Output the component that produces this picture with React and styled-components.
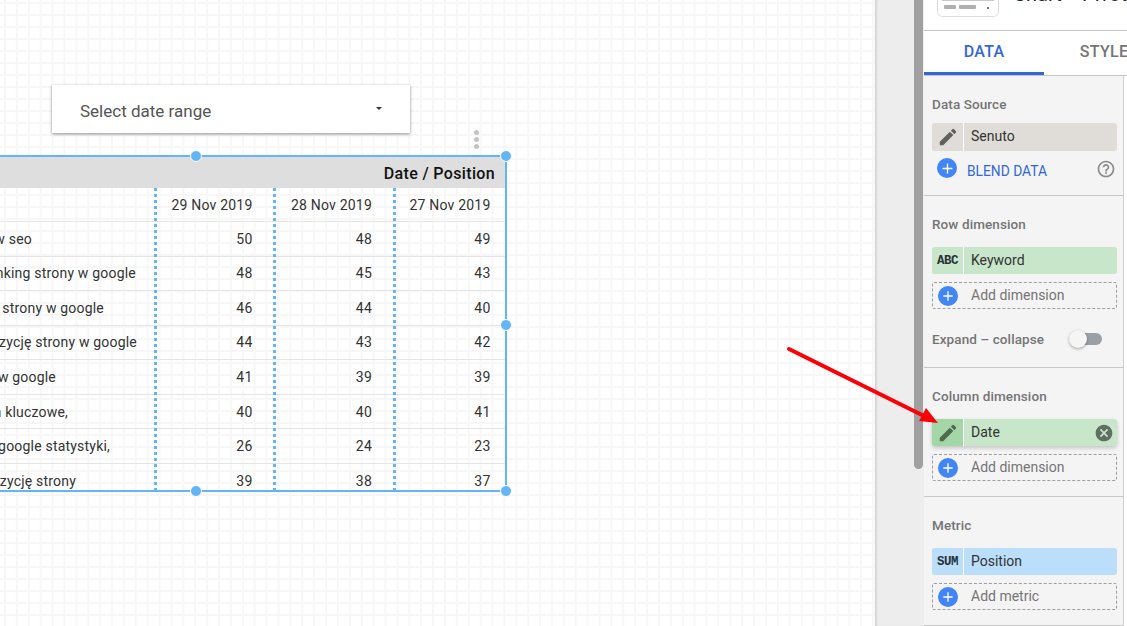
import React from 'react'
import styled, { createGlobalStyle } from 'styled-components'
import { MdEdit, MdAdd, MdHelpOutline, MdCancel } from 'react-icons/md'

const DATES = ['29 Nov 2019', '28 Nov 2019', '27 Nov 2019']

// keyword column is cut off by the left edge of the viewport, so each
// fragment carries the x where it ends
const ROWS = [
  { keyword: 'w seo', end: 32, values: [50, 48, 49] },
  { keyword: 'nking strony w google', end: 136, values: [48, 45, 43] },
  { keyword: 'strony w google', end: 104, values: [46, 44, 40] },
  { keyword: 'zycję strony w google', end: 137, values: [44, 43, 42] },
  { keyword: 'w google', end: 56, values: [41, 39, 39] },
  { keyword: 'a kluczowe,', end: 68, values: [40, 40, 41] },
  { keyword: 'google statystyki,', end: 110, values: [26, 24, 23] },
  { keyword: 'zycję strony', end: 76, values: [39, 38, 37] }
]

const Global = createGlobalStyle`
  html, body, #root {
    margin: 0;
    height: 100%;
    overflow: hidden;
  }
  body {
    font-family: Roboto, "Liberation Sans", sans-serif;
  }
`

function Handle({ x, y }) {
  return <SelectionHandle $x={x} $y={y} />
}

function Chip({ tint, iconTint, icon, label, tall, children }) {
  return (
    <ChipRow $tint={tint} $tall={tall}>
      <ChipIcon $tint={iconTint || tint}>{icon}</ChipIcon>
      <ChipLabel>{label}</ChipLabel>
      {children}
    </ChipRow>
  )
}

function AddField({ label }) {
  return (
    <DashedField>
      <AddCircle>
        <MdAdd size={16} />
      </AddCircle>
      <AddLabel>{label}</AddLabel>
    </DashedField>
  )
}

export default function App() {
  return (
    <Page>
      <Global />
      <Canvas>
        <DateFilter>
          <span>Select date range</span>
          <Caret />
        </DateFilter>
        <Kebab>
          <i />
          <i />
          <i />
        </Kebab>
        <Table>
          <TitleBar>Date / Position</TitleBar>
          <HeaderRow>
            <Cell />
            {DATES.map(date => (
              <Cell key={date}>{date}</Cell>
            ))}
          </HeaderRow>
          {ROWS.map(row => (
            <DataRow key={row.keyword}>
              <KeywordCell $end={row.end}>{row.keyword}</KeywordCell>
              {row.values.map((value, i) => (
                <Cell key={i}>{value}</Cell>
              ))}
            </DataRow>
          ))}
          <ColumnGuide $x={279} />
          <ColumnGuide $x={398} />
          <ColumnGuide $x={517.5} />
        </Table>
        <Handle x={196} y={156} />
        <Handle x={506} y={156} />
        <Handle x={506} y={325} />
        <Handle x={196} y={491} />
        <Handle x={506} y={491} />
      </Canvas>

      <Gutter>
        <ScrollThumb />
      </Gutter>

      <Panel>
        <PanelHeader>
          <ChartThumb viewBox="0 0 62 48" width="62" height="48">
            <rect x="0.5" y="0.5" width="61" height="47" rx="5" fill="#fff" stroke="#dcdcdc" />
            <rect x="7" y="24" width="8" height="4" fill="#b5b5b5" />
            <rect x="48" y="24" width="5" height="4" fill="#b5b5b5" />
            <rect x="5" y="31" width="52" height="1" fill="#c8c8c8" />
            <rect x="7" y="36" width="12" height="4" rx="1" fill="#b0b0b0" />
            <rect x="22" y="36" width="17" height="4" rx="1" fill="#b0b0b0" />
            <rect x="50" y="38" width="2" height="2" fill="#777" />
          </ChartThumb>
          <ChartTitle>Chart &gt; Pivot table</ChartTitle>
        </PanelHeader>

        <Tabs>
          <Tab $active>DATA</Tab>
          <Tab>STYLE</Tab>
        </Tabs>

        <PanelBody>
          <Sections>
            <Section>
              <SectionLabel $gap={11}>Data Source</SectionLabel>
              <Chip
                tall
                tint="#e0dcd8"
                icon={<MdEdit size={22} color="#616161" />}
                label="Senuto"
              />
              <BlendRow>
                <BlendCircle>
                  <MdAdd size={17} />
                </BlendCircle>
                <BlendLink>BLEND DATA</BlendLink>
                <MdHelpOutline size={20} color="#8a8a8a" />
              </BlendRow>
            </Section>

            <Section>
              <SectionLabel>Row dimension</SectionLabel>
              <Chip tint="#c8e6c9" icon={<TypeTag>ABC</TypeTag>} label="Keyword" />
              <AddField label="Add dimension" />
              <ToggleRow>
                <ToggleLabel>Expand – collapse</ToggleLabel>
                <ToggleTrack>
                  <ToggleKnob />
                </ToggleTrack>
              </ToggleRow>
            </Section>

            <Section>
              <SectionLabel>Column dimension</SectionLabel>
              <Raised>
                <Chip
                  tint="#c8e6c9"
                  iconTint="#a5d6a7"
                  icon={<MdEdit size={22} color="#4e6a50" />}
                  label="Date"
                >
                  <RemoveIcon>
                    <MdCancel size={20} />
                  </RemoveIcon>
                </Chip>
              </Raised>
              <AddField label="Add dimension" />
            </Section>

            <Section>
              <SectionLabel>Metric</SectionLabel>
              <Chip tint="#bbdefb" icon={<TypeTag>SUM</TypeTag>} label="Position" />
              <AddField label="Add metric" />
            </Section>
          </Sections>
        </PanelBody>
      </Panel>

      <Arrow viewBox="0 0 1127 626" width="1127" height="626">
        <line x1="789" y1="349" x2="924" y2="416" stroke="#fb0007" strokeWidth="4" strokeLinecap="round" />
        <polygon points="938,423 919,421 926,408" fill="#fb0007" />
      </Arrow>
    </Page>
  )
}

const Page = styled.div`
  display: flex;
  width: 1127px;
  height: 626px;
  overflow: hidden;
  color: #212121;
`

const Canvas = styled.div`
  position: relative;
  flex: 0 0 875px;
  height: 100%;
  overflow: hidden;
  background-color: #fff;
  background-image: linear-gradient(to right, #f7f7f7 2px, transparent 2px),
    linear-gradient(to bottom, #f7f7f7 2px, transparent 2px);
  background-size: 11.9px 12px;
  background-position: 4px 2px;
`

const DateFilter = styled.div`
  position: absolute;
  left: 52px;
  top: 85px;
  width: 358px;
  height: 48px;
  box-sizing: border-box;
  padding: 3px 28px 0 28px;
  display: flex;
  align-items: center;
  justify-content: space-between;
  background: #fff;
  box-shadow: 0 1px 3px rgba(0, 0, 0, 0.45);
  font-size: 17px;
  color: #555;
`

const Caret = styled.span`
  width: 0;
  height: 0;
  margin-bottom: 4px;
  border-left: 3.5px solid transparent;
  border-right: 3.5px solid transparent;
  border-top: 3.5px solid #333;
`

const Kebab = styled.div`
  position: absolute;
  left: 474px;
  top: 130px;
  display: flex;
  flex-direction: column;
  gap: 2px;

  i {
    display: block;
    width: 5px;
    height: 5px;
    border-radius: 50%;
    background: #c4c4c4;
  }
`

const Table = styled.div`
  position: absolute;
  left: -125px;
  top: 155px;
  width: 632px;
  height: 337px;
  box-sizing: border-box;
  border: 2px solid #64b5f6;
  border-left: 0;
  overflow: hidden;
`

const TitleBar = styled.div`
  height: 31px;
  padding: 1px 10px 0 0;
  box-sizing: border-box;
  display: flex;
  align-items: center;
  justify-content: flex-end;
  background: #dedede;
  font-size: 16px;
  font-weight: 500;
  letter-spacing: 0.35px;
  color: #111;
`

const GridRow = styled.div`
  display: grid;
  grid-template-columns: 280px 119.5px 119.5px 110.5px;
  box-sizing: border-box;
  border-bottom: 1px solid #e4e4e4;
`

const HeaderRow = styled(GridRow)`
  height: 34px;
`

const DataRow = styled(GridRow)`
  height: 34.57px;
`

const Cell = styled.div`
  display: flex;
  align-items: center;
  justify-content: flex-end;
  padding-right: 22px;
  font-size: 14px;
  letter-spacing: 0.2px;
  color: #333;
  white-space: nowrap;

  &:last-child {
    padding-right: 14px;
  }
`

const KeywordCell = styled(Cell)`
  padding-right: ${({ $end }) => 155 - $end}px;
`

const ColumnGuide = styled.div`
  position: absolute;
  left: ${({ $x }) => $x}px;
  top: 31px;
  bottom: 0;
  width: 3px;
  background: repeating-linear-gradient(to bottom, #64b5f6 0 3px, transparent 3px 6px);
`

const SelectionHandle = styled.div`
  position: absolute;
  left: ${({ $x }) => $x - 6}px;
  top: ${({ $y }) => $y - 6}px;
  width: 10px;
  height: 10px;
  border: 1px solid #fff;
  border-radius: 50%;
  background: #64b5f6;
`

const Gutter = styled.div`
  flex: 0 0 49px;
  display: flex;
  justify-content: flex-end;
  background: #ededed;
  box-shadow: inset 3px 0 3px -2px rgba(0, 0, 0, 0.18);
`

const ScrollThumb = styled.div`
  width: 9px;
  height: 469px;
  margin-right: 1px;
  border-radius: 0 0 5px 5px;
  background: #a0a0a0;
`

const Panel = styled.div`
  flex: 1;
  min-width: 0;
  display: flex;
  flex-direction: column;
  background: #fff;
  overflow: hidden;
`

const PanelHeader = styled.div`
  height: 31px;
  flex: none;
  box-sizing: border-box;
  display: flex;
  align-items: flex-end;
  gap: 14px;
  padding: 0 0 13px 13px;
  border-bottom: 1px solid #c4c4c4;
  white-space: nowrap;
`

const ChartThumb = styled.svg`
  flex: none;
`

const ChartTitle = styled.div`
  font-size: 20px;
  line-height: 24px;
  margin-bottom: 11px;
  color: #222;
`

const Tabs = styled.div`
  flex: 0 0 45px;
  box-sizing: border-box;
  display: flex;
  border-bottom: 1px solid #c4c4c4;
`

const Tab = styled.div`
  flex: 0 0 120px;
  box-sizing: border-box;
  height: 44px;
  padding-bottom: 1px;
  display: flex;
  align-items: center;
  justify-content: center;
  font-size: 16px;
  font-weight: 500;
  letter-spacing: 0.3px;
  color: ${({ $active }) => ($active ? '#3367d6' : '#757575')};
  border-bottom: 3px solid ${({ $active }) => ($active ? '#3367d6' : 'transparent')};
`

const PanelBody = styled.div`
  flex: 1;
  display: flex;
  background: #fff;
`

const Sections = styled.div`
  flex: 0 0 200px;
  box-sizing: border-box;
  background: #f4f4f4;
  border-right: 1px solid #d0d0d0;
`

const Section = styled.section`
  box-sizing: border-box;
  padding: 20px 6px 15px 8px;
  border-bottom: 1px solid #c8c8c8;
`

const SectionLabel = styled.div`
  height: 16px;
  line-height: 16px;
  margin-bottom: ${({ $gap }) => $gap || 15}px;
  font-size: 13.5px;
  font-weight: 500;
  letter-spacing: 0.1px;
  color: #757575;
`

const ChipRow = styled.div`
  display: flex;
  align-items: center;
  height: ${({ $tall }) => ($tall ? 28 : 27)}px;
  border-radius: 3px;
  overflow: hidden;
  background: ${({ $tint }) => $tint};
`

const ChipIcon = styled.div`
  flex: 0 0 31px;
  height: 100%;
  display: flex;
  align-items: center;
  justify-content: center;
  border-right: 1px solid #fff;
  background: ${({ $tint }) => $tint};
`

const ChipLabel = styled.div`
  flex: 1;
  padding: 0 0 2px 7px;
  font-size: 14px;
  color: #333;
`

const TypeTag = styled.span`
  font-family: "Liberation Mono", monospace;
  font-size: 12.5px;
  font-weight: 700;
  letter-spacing: -0.5px;
  color: #263238;
`

const Raised = styled.div`
  border-radius: 3px;
  box-shadow: 0 2px 4px rgba(0, 0, 0, 0.2);
`

const RemoveIcon = styled.div`
  display: flex;
  margin-right: 3px;
  color: #5f6f62;
`

const DashedField = styled.div`
  display: flex;
  align-items: center;
  height: 27px;
  box-sizing: border-box;
  margin-top: 8px;
  padding-left: 5px;
  border: 1px dashed #9e9e9e;
  border-radius: 2px;
`

const AddCircle = styled.div`
  flex: none;
  width: 20px;
  height: 20px;
  display: flex;
  align-items: center;
  justify-content: center;
  border-radius: 50%;
  background: #4285f4;
  color: #fff;
`

const AddLabel = styled.div`
  padding: 0 0 2px 13px;
  font-size: 14px;
  color: #757575;
`

const BlendRow = styled.div`
  display: flex;
  align-items: center;
  height: 24px;
  margin-top: 6px;
  margin-bottom: -1px;
  padding: 0 1px 0 5px;
`

const BlendCircle = styled(AddCircle)`
  margin-top: -2px;
`

const BlendLink = styled.div`
  flex: 1;
  padding: 4px 0 0 10px;
  font-size: 13.8px;
  color: #3367d6;
`

const ToggleRow = styled.div`
  display: flex;
  align-items: center;
  justify-content: space-between;
  height: 24px;
  margin-top: 18px;
  margin-bottom: 1px;
  padding-right: 15px;
`

const ToggleLabel = styled(SectionLabel)`
  margin: 0;
`

const ToggleTrack = styled.div`
  position: relative;
  width: 24px;
  height: 12px;
  border-radius: 6px;
  background: #9aa0a6;
`

const ToggleKnob = styled.div`
  position: absolute;
  left: -9px;
  top: -3px;
  width: 18px;
  height: 18px;
  border-radius: 50%;
  background: #f5f5f5;
  box-shadow: 0 1px 3px rgba(0, 0, 0, 0.35);
`

const Arrow = styled.svg`
  position: absolute;
  left: 0;
  top: 0;
  pointer-events: none;
`
